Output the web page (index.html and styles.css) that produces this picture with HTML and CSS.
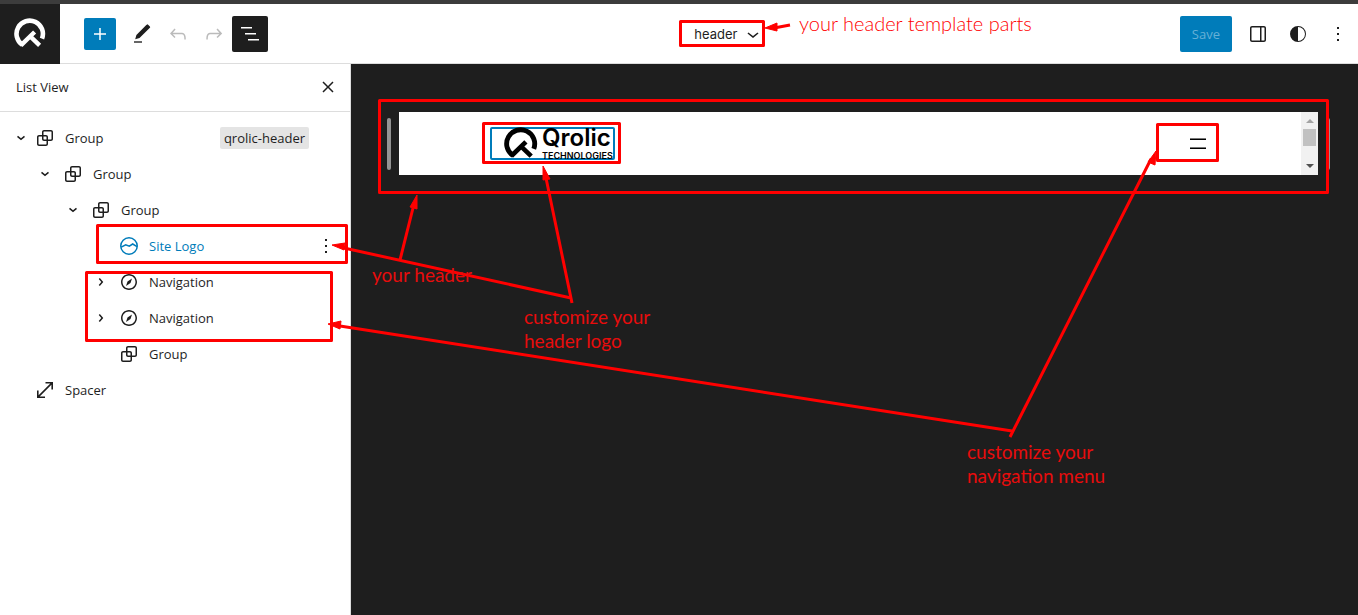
FILE: index.html
```html
<!DOCTYPE html>
<html lang="en">
<head>
<meta charset="utf-8">
<title>Template part editor</title>
<link rel="stylesheet" href="styles.css">
</head>
<body>
<svg class="defs" aria-hidden="true">
  <symbol id="mark" viewBox="0 0 32 32"><g fill="none" stroke="currentColor"><path stroke-width="4.6" d="M8.4 26.8A13.2 13.2 0 1 1 28 20.6"/><path stroke-width="4.4" d="M6.9 27.3 20.6 14M16 18.2l9.6 9.2"/></g></symbol>
  <symbol id="group" viewBox="0 0 24 24"><path d="M18 4h-7c-1.1 0-2 .9-2 2v3H6c-1.1 0-2 .9-2 2v7c0 1.1.9 2 2 2h7c1.1 0 2-.9 2-2v-3h3c1.1 0 2-.9 2-2V6c0-1.1-.9-2-2-2zm-4.5 14c0 .3-.2.5-.5.5H6c-.3 0-.5-.2-.5-.5v-7c0-.3.2-.5.5-.5h3V13c0 1.1.9 2 2 2h2.500v3zm0-4.500H11c-.3 0-.5-.2-.5-.5v-2.500H13c.3 0 .5.2.5.5v2.500zm5-.5c0 .3-.2.5-.5.5h-3V11c0-1.100-.9-2-2-2h-2.500V6c0-.3.2-.5.5-.5h7c.3 0 .5.2.5.5v7z"/></symbol>
  <symbol id="compass" viewBox="0 0 24 24"><path d="M12 4c-4.400 0-8 3.600-8 8s3.600 8 8 8 8-3.600 8-8-3.600-8-8-8zm0 14.500c-3.600 0-6.500-2.900-6.500-6.500S8.400 5.500 12 5.500s6.500 2.900 6.500 6.500-2.900 6.500-6.500 6.500zM9 16l4.500-3L15 8.400l-4.500 3L9 16z"/></symbol>
  <symbol id="sitelogo" viewBox="0 0 24 24"><g fill="none" stroke="currentColor" stroke-width="1.5"><circle cx="12" cy="12" r="8.250"/><path d="m4.200 13.200 4.500-2.400 3.600 1.400 3.400-2.200 4.300 2.600"/></g></symbol>
  <symbol id="small-right" viewBox="0 0 24 24"><path d="M10.862 8.040 14.280 12.029l-3.418 3.988-1.139-.976 2.582-3.012-2.582-3.012z"/></symbol>
  <symbol id="small-down" viewBox="0 0 24 24"><path d="m15.990 10.889-3.988 3.418-3.988-3.418.976-1.139 3.012 2.582 3.012-2.582z"/></symbol>
  <symbol id="dots" viewBox="0 0 24 24"><path d="M11 5h2v2h-2zM11 11h2v2h-2zM11 17h2v2h-2z"/></symbol>
</svg>

<div class="editor">
  <header class="topbar">
    <a class="site-link" href="#" aria-label="Back to site"><svg class="site-mark"><use href="#mark"/></svg></a>
    <div class="tools">
      <button class="tool add" aria-label="Add block"><svg class="icon" viewBox="0 0 24 24"><path d="M11.250 6h1.500v5.250H18v1.500h-5.250V18h-1.500v-5.250H6v-1.500h5.250z"/></svg></button>
      <button class="tool" aria-label="Tools"><svg class="icon" viewBox="0 0 24 24"><path d="m17.600 2.200 2.300 2.300c.4.4.4.9 0 1.300L9.500 16.100 5.200 17.300 6.400 13 16.300 2.900z"/><path fill="#666" d="M4 19h8v2H4z"/></svg></button>
      <button class="tool" aria-label="Undo" disabled><svg class="icon" viewBox="0 0 24 24"><path d="M18.300 11.700c-.6-.6-1.400-.9-2.300-.9H6.700l2.900-3.300-1.100-1-4.500 5L8.500 16l1-1-2.700-2.700H16c.5 0 .9.2 1.300.5 1 1 1 3.400 1 4.500v.3h1.500v-.2c0-1.500 0-4.300-1.500-5.700z"/></svg></button>
      <button class="tool" aria-label="Redo" disabled><svg class="icon" viewBox="0 0 24 24"><path d="m15.600 6.500-1.100 1 2.900 3.300H8c-.9 0-1.700.3-2.300.9-1.400 1.500-1.400 4.200-1.400 5.600v.2h1.500v-.3c0-1.100 0-3.500 1-4.500.3-.3.7-.5 1.300-.5h9.200L14.500 15l1.100 1.100 4.600-4.600z"/></svg></button>
      <button class="tool list-toggle" aria-label="List View" aria-pressed="true"><svg class="icon" viewBox="0 0 24 24"><path d="M3 5h11v1.500H3zM7 11h11v1.500H7zM10 17h11v1.500H10z"/></svg></button>
    </div>
    <div class="center"><button class="doc-title">header<svg class="icon" viewBox="0 0 24 24"><path d="M17.500 11.600 12 16l-5.500-4.400.9-1.200L12 14l4.500-3.600z"/></svg></button></div>
    <div class="actions">
      <button class="save" disabled>Save</button>
      <button class="action" aria-label="Settings"><svg class="icon" viewBox="0 0 24 24"><path fill-rule="evenodd" d="M18 4H6c-1.100 0-2 .9-2 2v12c0 1.100.9 2 2 2h12c1.100 0 2-.9 2-2V6c0-1.100-.9-2-2-2zm-4 14.500H6c-.3 0-.5-.2-.5-.5V6c0-.3.2-.5.5-.5h8zm4.500-.5c0 .3-.2.5-.5.5h-2.500v-13H18c.3 0 .5.2.5.5z"/></svg></button>
      <button class="action" aria-label="Styles"><svg class="icon" viewBox="0 0 24 24"><path fill-rule="evenodd" d="M12 4a8 8 0 1 0 0 16 8 8 0 0 0 0-16zm0 1a7 7 0 0 1 0 14z"/></svg></button>
      <button class="action" aria-label="Options"><svg class="icon"><use href="#dots"/></svg></button>
    </div>
  </header>

  <div class="body">
    <aside class="sidebar">
      <div class="side-head"><h2>List View</h2><button class="close" aria-label="Close"><svg class="icon" viewBox="0 0 24 24"><path d="m12 10.940 4.470-4.470 1.060 1.060L13.060 12l4.470 4.470-1.060 1.060L12 13.060l-4.470 4.470-1.060-1.060L10.940 12 6.470 7.530l1.060-1.060z"/></svg></button></div>
      <ul class="tree">
        <li class="row level-1"><svg class="icon"><use href="#small-down"/></svg><svg class="icon"><use href="#group"/></svg><a href="#">Group</a><span class="anchor">qrolic-header</span></li>
        <li class="row level-2"><svg class="icon"><use href="#small-down"/></svg><svg class="icon"><use href="#group"/></svg><a href="#">Group</a></li>
        <li class="row level-3"><svg class="icon"><use href="#small-down"/></svg><svg class="icon"><use href="#group"/></svg><a href="#">Group</a></li>
        <li class="row level-4 selected"><span class="icon"></span><svg class="icon logo-icon"><use href="#sitelogo"/></svg><a href="#">Site Logo</a><button class="more" aria-label="Options"><svg class="icon"><use href="#dots"/></svg></button></li>
        <li class="row level-4"><svg class="icon"><use href="#small-right"/></svg><svg class="icon"><use href="#compass"/></svg><a href="#">Navigation</a></li>
        <li class="row level-4"><svg class="icon"><use href="#small-right"/></svg><svg class="icon"><use href="#compass"/></svg><a href="#">Navigation</a></li>
        <li class="row level-4"><span class="icon"></span><svg class="icon"><use href="#group"/></svg><a href="#">Group</a></li>
        <li class="row level-1"><span class="icon"></span><svg class="icon" viewBox="0 0 24 24"><path d="M12.500 4v1.600h4.800L5.600 17.300V12.500H4V20h8v-1.600H6.700L18.400 6.700v4.800H20V4z"/></svg><a href="#">Spacer</a></li>
      </ul>
    </aside>

    <main class="canvas">
      <span class="handle"></span>
      <div class="frame">
        <div class="page-header">
          <a class="brand" href="#"><svg class="brand-mark"><use href="#mark"/></svg><span class="brand-text"><span class="brand-name">Qrolic</span><span class="brand-sub">TECHNOLOGIES</span></span></a>
          <button class="burger" aria-label="Open menu"><span></span><span></span></button>
        </div>
        <div class="scrollbar"><i class="up"></i><i class="thumb"></i><i class="down"></i></div>
      </div>
      <span class="handle"></span>
    </main>
  </div>

  <svg class="marks" width="1358" height="615" viewBox="0 0 1358 615" aria-hidden="true">
    <g class="boxes">
      <rect x="680.500" y="21.500" width="83" height="24"/>
      <rect x="379.500" y="100.500" width="948" height="92"/>
      <rect x="483.500" y="123.500" width="136" height="39"/>
      <rect x="1157.500" y="124.500" width="60" height="36"/>
      <rect x="97.500" y="225.500" width="249" height="37"/>
      <rect x="86.500" y="272.500" width="245" height="68"/>
      <path d="M790 25l-16 3M400 260l13-52M572 303 546 178M571 298 344 248M1010 437l141-278M1012 431 340 326"/>
    </g>
    <path class="heads" d="M765 28l12-5v8zM417 195l0 14-7-2zM543 166l7 13-7 1zM332 245l13-2-1 7zM328 324l13-3-1 8zM1156 151l-1 14-7-3z"/>
  </svg>
  <p class="note note-title">your header template parts</p>
  <p class="note note-header">your header</p>
  <p class="note note-logo">customize your<br>header logo</p>
  <p class="note note-nav">customize your<br>navigation menu</p>
</div>
</body>
</html>
```
FILE: styles.css
```css
* { box-sizing: border-box; }
body { margin: 0; font: 13px/20px "Open Sans", sans-serif; color: #1e1e1e; }
button { border: 0; background: none; padding: 0; margin: 0; font: inherit; color: inherit; }
a { color: inherit; text-decoration: none; }
.defs { position: absolute; width: 0; height: 0; }
.icon { width: 24px; height: 24px; flex: none; display: block; fill: currentColor; }
.editor { position: relative; min-height: 100vh; display: flex; flex-direction: column; overflow: hidden; border-top: 4px solid #3c3c3c; }

.topbar { display: flex; align-items: center; height: 60px; background: #fff; border-bottom: 1px solid #ddd; }
.site-link { width: 60px; height: 60px; flex: none; display: grid; place-items: center; background: #1e1e1e; color: #fff; }
.site-mark { width: 32px; height: 32px; }
.tools { display: flex; align-items: center; gap: 8px; padding-left: 24px; }
.tool { width: 28px; height: 36px; display: grid; place-items: center; border-radius: 2px; }
.tool:disabled { color: #bbb; }
.tool.add { width: 32px; height: 32px; background: #007cba; color: #fff; margin-right: 4px; }
.tool.list-toggle { width: 36px; margin-left: -4px; background: #1e1e1e; color: #fff; }
.center { flex: 1; display: flex; justify-content: center; padding-left: 8px; }
.doc-title { display: flex; align-items: center; gap: 4px; padding-left: 4px; font-family: Inter, sans-serif; }
.actions { display: flex; align-items: center; padding-right: 4px; }
.save { height: 36px; padding: 0 12px; margin-right: 10px; border-radius: 2px; background: #007cba; color: #66b0d6; }
.action { width: 32px; height: 36px; margin-right: 8px; display: grid; place-items: center; }
.action:last-child { margin-right: 0; }

.body { flex: 1; display: flex; }
.sidebar { width: 351px; flex: none; border-right: 1px solid #ddd; background: #fff; }
.side-head { height: 48px; display: flex; align-items: center; justify-content: space-between; padding: 0 10px 2px 16px; border-bottom: 1px solid #ddd; }
.side-head h2 { margin: 0; font-size: 13px; font-weight: 400; }
.tree { list-style: none; margin: 0; padding: 8px 0; }
.row { display: flex; align-items: center; height: 36px; padding-right: 12px; }
.row a { margin-left: 8px; }
.level-1 { padding-left: 9px; }
.level-2 { padding-left: 33px; }
.level-3 { padding-left: 61px; }
.level-4 { padding-left: 89px; }
.level-2 .icon + .icon, .level-3 .icon + .icon, .level-4 .icon + .icon { margin-left: 4px; }
.selected a, .logo-icon { color: #007cba; }
.more { margin-left: auto; }
.anchor { margin: 0 29px 0 auto; padding: 1px 4px; border-radius: 2px; background: #e4e4e4; }

.canvas { flex: 1; min-width: 0; display: flex; align-items: flex-start; gap: 8px; padding: 48px 28px 0 36px; background: #1e1e1e; }
.handle { width: 4px; height: 52px; margin-top: 6px; flex: none; border-radius: 2px; background: #949494; }
.frame { flex: 1; display: flex; height: 63px; background: #fff; }
.page-header { flex: 1; display: flex; align-items: center; justify-content: space-between; padding: 0 95px 0 91px; }
.brand { display: flex; align-items: center; width: 125px; height: 33px; padding-left: 12px; gap: 4px; border: 2px solid #007cba; border-radius: 2px; color: #000; }
.brand-mark { width: 34px; height: 34px; flex: none; }
.brand-text { display: flex; flex-direction: column; gap: 4px; }
.brand-name { font: 600 24px/20px Inter, sans-serif; }
.brand-sub { font: 600 9px/8px Inter, sans-serif; }
.burger { width: 16px; display: grid; gap: 7px; }
.burger span { height: 2px; background: #000; border-top: 1px solid #777; }
.scrollbar { width: 17px; display: flex; flex-direction: column; align-items: center; background: #f1f1f1; padding: 7px 0; }
.scrollbar i { border: 4px solid transparent; }
.up { border-top: 0 !important; border-bottom-color: #a3a3a3 !important; }
.down { border-bottom: 0 !important; border-top-color: #505050 !important; margin-top: auto; }
.scrollbar .thumb { width: 13px; height: 17px; margin-top: 6px; border: 0; background: #c1c1c1; }

/* annotations drawn over the editor */
.marks { position: absolute; left: 0; top: -4px; pointer-events: none; }
.boxes { fill: none; stroke: #f00; stroke-width: 3; stroke-linejoin: round; }
.heads { fill: #f00; stroke: #f00; stroke-linejoin: round; }
.note { position: absolute; margin: 0; font: 19px/24px Lato, sans-serif; color: #e80c0c; white-space: nowrap; }
.note-title { left: 799px; top: 7px; font-size: 20px; font-weight: 300; color: #f00; }
.note-header { left: 372px; top: 259px; }
.note-logo { left: 524px; top: 301px; }
.note-nav { left: 967px; top: 436px; }
```
